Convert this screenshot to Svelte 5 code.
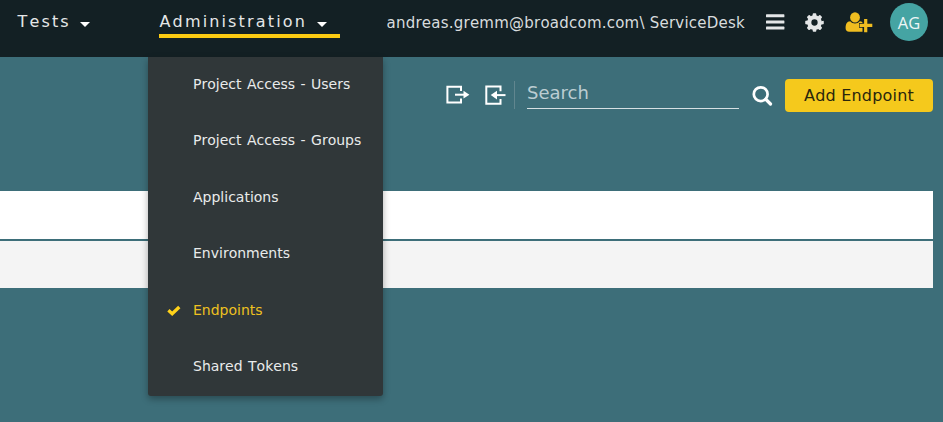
<script>
  const items = [
    'Project Access - Users',
    'Project Access - Groups',
    'Applications',
    'Environments',
    'Endpoints',
    'Shared Tokens'
  ];
  let selected = $state('Endpoints');
</script>

<div class="app">
  <header>
    <nav>
      <button class="tab tests"><span>Tests</span><i class="caret"></i></button>
      <div class="dropdown">
        <button class="tab active"><span>Administration</span><i class="caret"></i></button>
        <div class="menu">
          {#each items as item}
            <button class="item" class:selected={item === selected} onclick={() => (selected = item)}>
              <span class="mark">
                {#if item === selected}
                  <svg width="14" height="12" viewBox="0 0 14 12"><path d="M1.4 5.3 L5.2 8.800 L12.300 2" fill="none" stroke="currentColor" stroke-width="3.300" /></svg>
                {/if}
              </span>
              <span class="label">{item}</span>
            </button>
          {/each}
        </div>
      </div>
    </nav>
    <div class="account">
      <span class="user">andreas.gremm@broadcom.com\ ServiceDesk</span>
      <svg class="bars" width="19" height="17" viewBox="0 0 19 17" fill="#e4e6e7"><rect x="0" y=".3" width="18.4" height="3" rx=".6" /><rect x="0" y="6.500" width="18.4" height="3" rx=".6" /><rect x="0" y="12.600" width="18.4" height="3" rx=".6" /></svg>
      <svg class="gear" width="19" height="19" viewBox="0 0 512 512" fill="#e4e6e7"><path d="M444 222l48-10c8-2 14 6 14 14v60c0 8-6 15-14 16l-48 8c-4 15-10 30-18 43l30 40c5 6 4 15-2 21l-41 41c-6 6-15 7-21 2l-40-29c-13 8-27 14-42 18l-8 48c-1 8-8 14-16 14h-60c-8 0-15-6-16-14l-8-48c-15-4-29-10-42-18l-40 29c-6 5-15 4-21-2l-41-41c-6-6-7-15-2-21l29-40c-8-13-14-28-18-43l-48-8c-8-1-13-8-13-16v-60c0-8 5-15 13-16l48-8c4-15 10-29 18-42l-29-40c-5-6-4-15 2-21l41-41c6-6 15-7 21-2l40 29c13-8 27-14 42-18l8-48c1-8 8-14 16-14h60c8 0 15 6 16 14l8 48c15 4 29 10 42 18l40-29c6-5 15-4 21 2l41 41c6 6 7 15 2 21l-29 40c8 13 14 27 18 42zM256 171a85 85 0 1 0 0 170 85 85 0 1 0 0-170z" /></svg>
      <svg class="person" width="28" height="22" viewBox="0 0 28 22" fill="#f0bd20"><ellipse cx="10" cy="6.4" rx="4.900" ry="5.2" /><path d="M5.200 10.300c1.300 1.500 2.900 2.200 4.800 2.200s3.500-.7 4.800-2.200c1.100.1 1.900.4 2.600 1V12H14v4.800h3.500v3.900H4.100C2 20.700.6 19.400.6 17.200c0-4 1.200-6.800 4.600-6.900z" /><path d="M19.100 7.900h3.200v4.900h5v3.200h-5v5.200h-3.200V16h-4.500v-3.200h4.500z" /></svg>
      <span class="avatar">AG</span>
    </div>
  </header>

  <main>
    <div class="toolbar">
      <svg class="export" width="24" height="20" viewBox="0 0 24 20"><path d="M15 6V1.700H1.400v15.900H15V13.500" fill="none" stroke="#fff" stroke-width="2" /><path d="M9 9.700h9" stroke="#fff" stroke-width="2" /><path d="M17.500 5.800L23.400 9.700l-5.900 3.900z" fill="#fff" /></svg>
      <svg class="import" width="22" height="20" viewBox="0 0 22 20"><path d="M15.500 6.200V1.500H1.300v17.200H15.500V14" fill="none" stroke="#fff" stroke-width="2" /><path d="M10.500 10.100h10" stroke="#fff" stroke-width="2" /><path d="M12 5.700L5.700 10.100l6.300 4.400z" fill="#fff" /></svg>
      <span class="divider"></span>
      <input type="text" placeholder="Search" />
      <svg class="lens" width="21" height="21" viewBox="0 0 21 21" fill="none" stroke="#fff"><circle cx="8.700" cy="9.200" r="6.900" stroke-width="2.700" /><path d="M14 14.500l4.500 4.500" stroke-width="3.200" stroke-linecap="round" /></svg>
      <button class="add">Add Endpoint</button>
    </div>
    <div class="rows">
      <div class="row"></div>
      <div class="row alt"></div>
    </div>
  </main>
</div>

<style>
  :global(body) { margin: 0; }
  .app {
    width: 943px;
    height: 422px;
    overflow: hidden;
    background: #3d6e79;
    font-family: "DejaVu Sans", Verdana, sans-serif;
    font-kerning: none;
    display: flex;
    flex-direction: column;
  }
  button { font: inherit; font-kerning: none; border: 0; margin: 0; padding: 0; background: none; color: inherit; cursor: pointer; }
  svg { flex: none; display: block; }
  header {
    box-sizing: border-box;
    height: 57px;
    flex: none;
    background: #132024;
    display: flex;
    justify-content: space-between;
    align-items: flex-start;
  }
  nav { display: flex; padding-left: 17.5px; color: #e5e7e8; }
  .tab {
    box-sizing: border-box;
    height: 38px;
    padding-top: 12px;
    display: flex;
    align-items: flex-start;
    font-size: 16px;
    line-height: 19px;
    letter-spacing: 2.15px;
    white-space: nowrap;
  }
  .tests { width: 141px; }
  .tests span { width: 62px; text-align: left; }
  .active { width: 181px; border-bottom: 4px solid #fccb12; padding-left: 1px; }
  .active span { width: 157px; text-align: left; }
  .caret {
    width: 0;
    height: 0;
    margin-top: 10px;
    border: 5px solid transparent;
    border-top-color: #fff;
    border-bottom: 0;
  }
  .dropdown { position: relative; }
  .menu {
    position: absolute;
    z-index: 2;
    left: -10.5px;
    top: 57px;
    width: 235px;
    height: 339px;
    background: #303739;
    border-radius: 0 0 3px 3px;
    box-shadow: 0 3px 7px rgba(0, 0, 0, .32);
    display: flex;
    flex-direction: column;
  }
  .item { flex: none; box-sizing: border-box; height: 56.33px; display: flex; align-items: center; color: #e9ebeb; font-size: 14px; white-space: nowrap; padding-bottom: 2px; }
  .label { word-spacing: 1px; }
  .mark { width: 26px; padding-left: 19px; padding-top: 3px; }
  .selected { color: #eec120; padding-bottom: 1px; }
  .selected .mark { color: #ffd21a; }
  .account { display: flex; align-items: center; height: 44px; padding-right: 15px; }
  .user { font-size: 15px; letter-spacing: .23px; color: #d8dcde; white-space: nowrap; margin-top: 2px; }
  .bars { margin-left: 21px; }
  .gear { margin-left: 20px; }
  .person { margin-left: 21px; }
  .avatar {
    width: 38px;
    height: 38px;
    border-radius: 50%;
    margin-left: 17px;
    background: #45a4a3;
    color: #eef6f6;
    display: grid;
    place-items: center;
    font-size: 16.5px;
    font-family: "Open Sans", "Noto Sans", sans-serif;
  }
  .toolbar { display: flex; justify-content: flex-end; align-items: center; height: 34px; padding: 21px 10px 0 0; }
  .import { margin-left: 15px; }
  .divider { width: 1px; height: 28px; background: #61868f; margin-left: 7px; }
  input {
    box-sizing: border-box;
    width: 212px;
    height: 28px;
    margin-left: 12px;
    padding: 0 0 5px;
    border: 0;
    border-bottom: 1px solid #d6e0e3;
    background: none;
    color: #fff;
    font: 18px "DejaVu Sans", sans-serif;
    outline: 0;
  }
  input::placeholder { color: #bbcdd2; opacity: 1; }
  .lens { margin-left: 13px; }
  .add {
    width: 148px;
    height: 33px;
    margin-left: 12px;
    background: #f5c91c;
    color: #29260c;
    border-radius: 4px;
    font-size: 16px;
    letter-spacing: .2px;
    white-space: nowrap;
  }
  .rows { margin-top: 79px; width: 933px; display: flex; flex-direction: column; gap: 2px; }
  .row { height: 48px; background: #fff; }
  .alt { height: 47px; background: #f4f4f4; }
</style>
